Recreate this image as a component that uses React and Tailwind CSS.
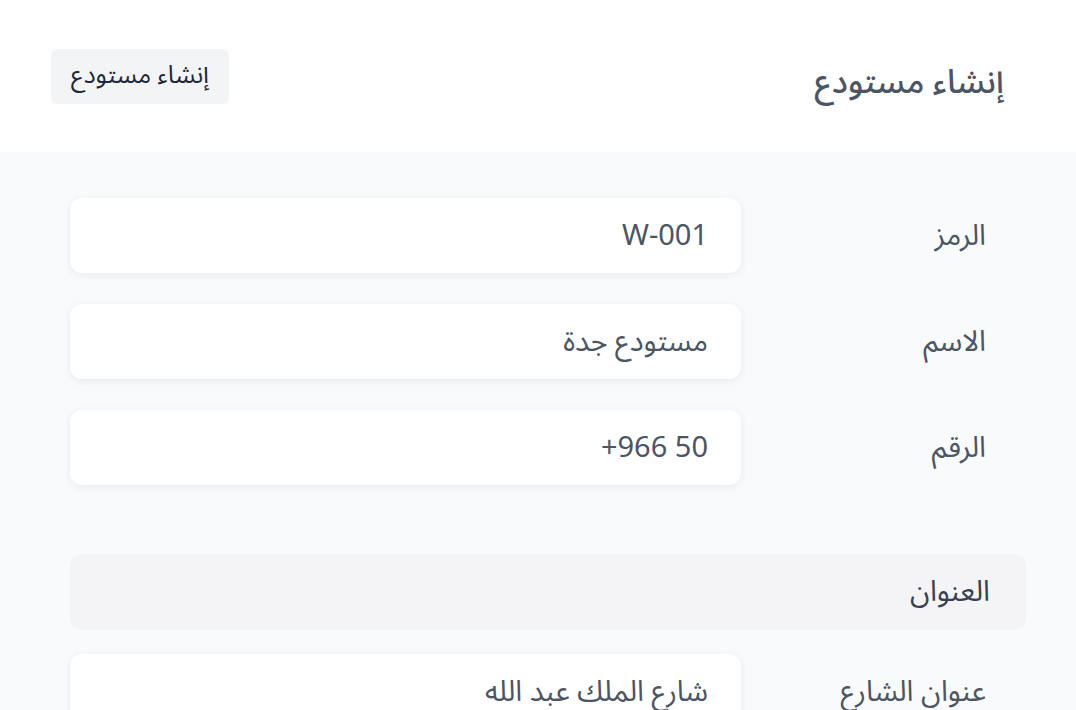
import React from "react";

const fields = [
  { label: "الرمز", value: "W-001" },
  { label: "الاسم", value: "مستودع جدة" },
  { label: "الرقم", value: "+966 50", ltr: true },
];

function Row({ label, value, ltr }) {
  return (
    <div className="flex items-center h-[75px]">
      <div className="w-[285px] pr-[40px] text-[29px] leading-none text-[#4b5563]">{label}</div>
      <div className="w-[671px] h-[75px] bg-white rounded-xl shadow-[0_2px_8px_rgba(17,24,39,0.07)] flex items-center pr-[33px]">
        <span dir={ltr ? "ltr" : "rtl"} className="text-[29px] leading-none text-[#4b5563]">
          {value}
        </span>
      </div>
    </div>
  );
}

export default function App() {
  return (
    <div
      dir="rtl"
      className="w-[1076px] h-[710px] overflow-hidden bg-[#f9fafb]"
      style={{ fontFamily: '"Noto Sans Arabic", "Noto Sans", "DejaVu Sans", sans-serif' }}
    >
      {/* Header */}
      <div className="h-[152px] bg-white flex items-center justify-between pr-[72px] pl-[51px]">
        <h1 className="text-[33px] font-medium text-[#4b5563] mt-[14px]">إنشاء مستودع</h1>
        <button className="h-[55px] w-[178px] bg-[#f3f4f6] rounded-md text-[25px] text-[#1f2937]">
          إنشاء مستودع
        </button>
      </div>

      {/* Body */}
      <div className="pt-[46px] pr-[50px] pl-[70px] flex flex-col">
        <div className="flex flex-col gap-[31px]">
          {fields.map((f) => (
            <Row key={f.label} {...f} />
          ))}
        </div>

        <div className="mt-[69px] h-[76px] bg-[#f4f4f7] rounded-xl flex items-center pr-[36px] text-[29px] text-[#374151]">
          العنوان
        </div>

        <div className="mt-[24px]">
          <Row label="عنوان الشارع" value="شارع الملك عبد الله" />
        </div>
      </div>
    </div>
  );
}
